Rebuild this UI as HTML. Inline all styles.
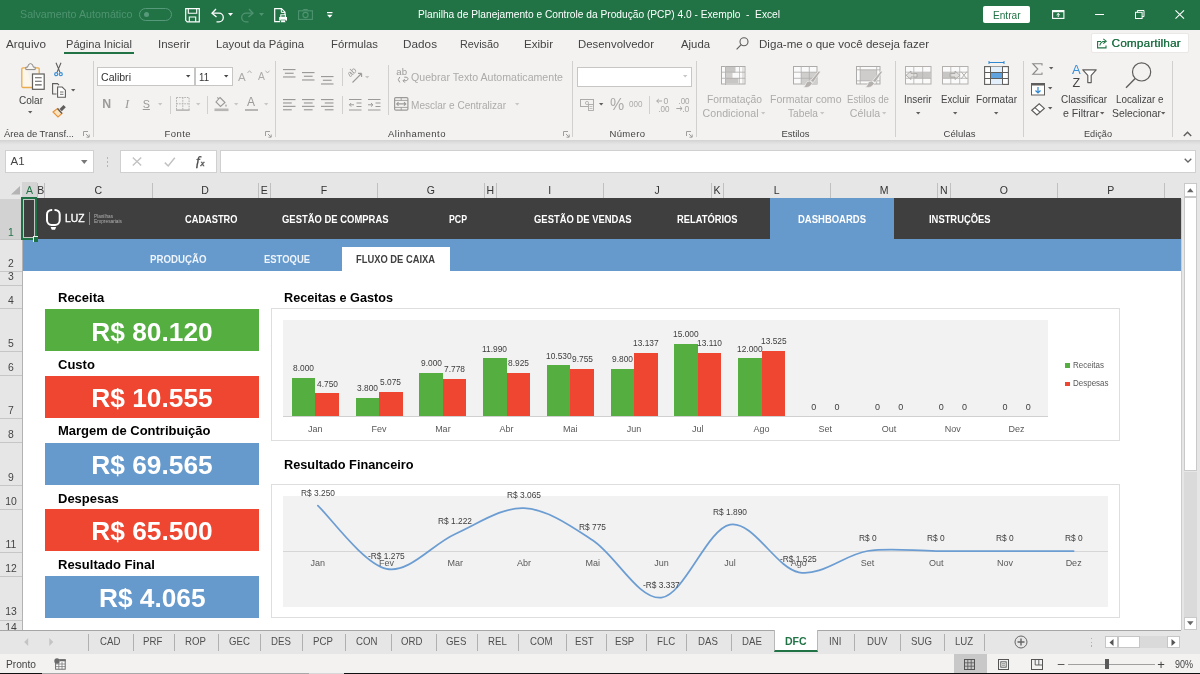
<!DOCTYPE html>
<html><head><meta charset="utf-8"><title>Excel</title>
<style>
html,body{margin:0;padding:0;}
body{width:1200px;height:674px;overflow:hidden;background:#e6e6e6;font-family:"Liberation Sans",sans-serif;}
#r{position:relative;width:1200px;height:674px;overflow:hidden;will-change:transform;}
#r div,#r svg{position:absolute;box-sizing:border-box;}
#r svg{overflow:visible;}
.t{white-space:nowrap;}
</style></head><body><div id="r">
<div style="left:0px;top:0px;width:1200px;height:30px;background:#217346;"></div>
<div class="t" style="left:20.00px;top:7.00px;font-size:11px;line-height:15px;color:#4f9370;transform:scaleX(0.9735);transform-origin:0 50%;">Salvamento Automático</div>
<div style="left:139px;top:7.5px;width:33px;height:13.5px;border:1px solid #57997b;border-radius:7px;"></div>
<div style="left:143.5px;top:11.5px;width:5.5px;height:5.5px;background:#57997b;border-radius:50%;"></div>
<div class="t" style="left:418.00px;top:7.00px;font-size:10.8px;line-height:15px;color:#fff;transform:scaleX(0.9440);transform-origin:0 50%;white-space:pre;">Planilha de Planejamento e Controle da Produção (PCP) 4.0 - Exemplo  -  Excel</div>
<div style="left:983px;top:6px;width:46.5px;height:16.5px;background:#fff;border-radius:2px;"></div>
<div class="t" style="left:992.75px;top:6.50px;font-size:11.5px;line-height:16px;color:#217346;transform:scaleX(0.8781);transform-origin:0 50%;">Entrar</div>
<div style="left:0px;top:30px;width:1200px;height:110px;background:#f3f2f1;"></div>
<div style="left:0px;top:140px;width:1200px;height:4.5px;background:linear-gradient(#d2d2d2,#e0e0e0 60%,#e6e6e6);"></div>
<div class="t" style="left:6.00px;top:35.70px;font-size:11.7px;line-height:16px;color:#444;letter-spacing:0.062px;">Arquivo</div>
<div class="t" style="left:66.00px;top:35.70px;font-size:11.7px;line-height:16px;color:#444;transform:scaleX(0.9494);transform-origin:0 50%;">Página Inicial</div>
<div class="t" style="left:158.00px;top:35.70px;font-size:11.7px;line-height:16px;color:#444;transform:scaleX(0.9855);transform-origin:0 50%;">Inserir</div>
<div class="t" style="left:216.00px;top:35.70px;font-size:11.7px;line-height:16px;color:#444;transform:scaleX(0.9673);transform-origin:0 50%;">Layout da Página</div>
<div class="t" style="left:331.00px;top:35.70px;font-size:11.7px;line-height:16px;color:#444;transform:scaleX(0.9649);transform-origin:0 50%;">Fórmulas</div>
<div class="t" style="left:403.00px;top:35.70px;font-size:11.7px;line-height:16px;color:#444;letter-spacing:0.054px;">Dados</div>
<div class="t" style="left:460.00px;top:35.70px;font-size:11.7px;line-height:16px;color:#444;transform:scaleX(0.9236);transform-origin:0 50%;">Revisão</div>
<div class="t" style="left:524.00px;top:35.70px;font-size:11.7px;line-height:16px;color:#444;transform:scaleX(0.9923);transform-origin:0 50%;">Exibir</div>
<div class="t" style="left:578.00px;top:35.70px;font-size:11.7px;line-height:16px;color:#444;transform:scaleX(0.9749);transform-origin:0 50%;">Desenvolvedor</div>
<div class="t" style="left:681.00px;top:35.70px;font-size:11.7px;line-height:16px;color:#444;transform:scaleX(0.9702);transform-origin:0 50%;">Ajuda</div>
<div class="t" style="left:759.00px;top:35.70px;font-size:11.7px;line-height:16px;color:#444;transform:scaleX(0.9912);transform-origin:0 50%;">Diga-me o que você deseja fazer</div>
<div style="left:64px;top:51.7px;width:70px;height:2.5px;background:#217346;"></div>
<div style="left:1090.5px;top:32.7px;width:98.5px;height:20.3px;background:#fff;border:1px solid #eae8e6;border-radius:2px;"></div>
<div class="t" style="left:1111.50px;top:35.10px;font-size:11.7px;line-height:16px;color:#217346;letter-spacing:0.191px;text-shadow:0.3px 0 0 #217346;">Compartilhar</div>
<div class="t" style="left:3.50px;top:127.10px;font-size:9.5px;line-height:13px;color:#444;transform:scaleX(0.9967);transform-origin:0 50%;">Área de Transf...</div>
<div class="t" style="left:164.50px;top:127.10px;font-size:9.5px;line-height:13px;color:#444;letter-spacing:0.427px;">Fonte</div>
<div class="t" style="left:388.00px;top:127.10px;font-size:9.5px;line-height:13px;color:#444;letter-spacing:0.469px;">Alinhamento</div>
<div class="t" style="left:609.50px;top:127.10px;font-size:9.5px;line-height:13px;color:#444;letter-spacing:0.342px;">Número</div>
<div class="t" style="left:781.50px;top:127.10px;font-size:9.5px;line-height:13px;color:#444;">Estilos</div>
<div class="t" style="left:943.50px;top:127.10px;font-size:9.5px;line-height:13px;color:#444;letter-spacing:0.053px;">Células</div>
<div class="t" style="left:1084.00px;top:127.10px;font-size:9.5px;line-height:13px;color:#444;transform:scaleX(0.9639);transform-origin:0 50%;">Edição</div>
<div style="left:93.0px;top:61px;width:1px;height:76px;background:#d2d0ce;"></div>
<div style="left:275.0px;top:61px;width:1px;height:76px;background:#d2d0ce;"></div>
<div style="left:572.3px;top:61px;width:1px;height:76px;background:#d2d0ce;"></div>
<div style="left:696.3px;top:61px;width:1px;height:76px;background:#d2d0ce;"></div>
<div style="left:894.7px;top:61px;width:1px;height:76px;background:#d2d0ce;"></div>
<div style="left:1023.1px;top:61px;width:1px;height:76px;background:#d2d0ce;"></div>
<div style="left:1171.9px;top:61px;width:1px;height:76px;background:#d2d0ce;"></div>
<svg style="left:83px;top:131px;" width="7" height="7" viewBox="0 0 7 7"><path d="M0.5 5 V0.5 H5" fill="none" stroke="#a19f9d" stroke-width="1"/><path d="M3 3 L6 6 M6.2 3.5 V6.2 H3.5" fill="none" stroke="#a19f9d" stroke-width="1"/></svg>
<svg style="left:265px;top:131px;" width="7" height="7" viewBox="0 0 7 7"><path d="M0.5 5 V0.5 H5" fill="none" stroke="#a19f9d" stroke-width="1"/><path d="M3 3 L6 6 M6.2 3.5 V6.2 H3.5" fill="none" stroke="#a19f9d" stroke-width="1"/></svg>
<svg style="left:562.5px;top:131px;" width="7" height="7" viewBox="0 0 7 7"><path d="M0.5 5 V0.5 H5" fill="none" stroke="#a19f9d" stroke-width="1"/><path d="M3 3 L6 6 M6.2 3.5 V6.2 H3.5" fill="none" stroke="#a19f9d" stroke-width="1"/></svg>
<svg style="left:686px;top:131px;" width="7" height="7" viewBox="0 0 7 7"><path d="M0.5 5 V0.5 H5" fill="none" stroke="#a19f9d" stroke-width="1"/><path d="M3 3 L6 6 M6.2 3.5 V6.2 H3.5" fill="none" stroke="#a19f9d" stroke-width="1"/></svg>
<svg style="left:1183px;top:131px;" width="9" height="6" viewBox="0 0 9 6"><path d="M0.8 5 L4.5 1.2 L8.2 5" fill="none" stroke="#605e5c" stroke-width="1.4"/></svg>
<svg style="left:20px;top:62px;" width="26" height="29" viewBox="0 0 26 29"><path d="M6.5 5.8 H3 a1.2 1.2 0 0 0 -1.2 1.2 V24.3 a1.2 1.2 0 0 0 1.2 1.2 H12" fill="#fdf6ea" stroke="#e9ab4c" stroke-width="1.3"/>
<path d="M14.5 5.8 H18 a1.2 1.2 0 0 1 1.2 1.2 V11.5" fill="none" stroke="#e9ab4c" stroke-width="1.3"/>
<path d="M5.8 7.6 V5.2 H7.6 Q8 1.6 10.5 1.6 Q13 1.6 13.4 5.2 H15.2 V7.6 Z" fill="#f6f5f4" stroke="#8a8886" stroke-width="1"/>
<rect x="12.5" y="12" width="11.7" height="15.3" fill="#fff" stroke="#605e5c" stroke-width="1.2"/>
<path d="M15 15.7 H21.7 M15 19.3 H21.7 M15 22.9 H21.7" stroke="#605e5c" stroke-width="1.1"/></svg>
<div class="t" style="left:18.70px;top:92.50px;font-size:10.6px;line-height:15px;color:#444;transform:scaleX(0.9480);transform-origin:0 50%;">Colar</div>
<svg style="left:28.3px;top:111.1px;" width="4.4" height="2.6" viewBox="0 0 4.4 2.6"><path d="M0 0 H4.4 L2.2 2.6 Z" fill="#605e5c"/></svg>
<svg style="left:53px;top:62px;" width="11" height="15" viewBox="0 0 11 15"><path d="M3 0.8 L7 10.4 M8 0.8 L4 10.4" stroke="#605e5c" stroke-width="1.1" fill="none"/>
<circle cx="3.2" cy="12.2" r="1.5" fill="none" stroke="#3a8fd6" stroke-width="1.2"/><circle cx="7.8" cy="12.2" r="1.5" fill="none" stroke="#3a8fd6" stroke-width="1.2"/></svg>
<svg style="left:52px;top:83px;" width="15" height="15" viewBox="0 0 15 15"><path d="M4.5 11 H0.6 V0.6 H5.5 L7 2.2" fill="none" stroke="#605e5c" stroke-width="1.1"/>
<path d="M5.6 4 H10.2 L13.4 7.2 V14.2 H5.6 Z" fill="#fff" stroke="#605e5c" stroke-width="1.1"/><path d="M8 9 H11.5 M8 11.3 H11.5" stroke="#605e5c" stroke-width="0.9"/></svg>
<svg style="left:71.1px;top:88.8px;" width="4.4" height="2.6" viewBox="0 0 4.4 2.6"><path d="M0 0 H4.4 L2.2 2.6 Z" fill="#605e5c"/></svg>
<svg style="left:52px;top:104px;" width="15" height="14" viewBox="0 0 15 14"><path d="M1 8 L5.5 4.5 L10 9.5 L6 13 Z" fill="#fbe3c0" stroke="#e8923a" stroke-width="1.1"/>
<path d="M7.5 5 L11.5 1 L13.8 3.2 L9.8 7.3 Z" fill="#605e5c"/><path d="M5.5 4.5 L10 9.5" stroke="#605e5c" stroke-width="1.3"/></svg>
<div style="left:97px;top:66.8px;width:97.5px;height:19.7px;background:#fff;border:1px solid #c8c6c4;"></div>
<div style="left:195.3px;top:66.8px;width:37.4px;height:19.7px;background:#fff;border:1px solid #c8c6c4;"></div>
<div class="t" style="left:100.70px;top:69.50px;font-size:10.8px;line-height:15px;color:#333;transform:scaleX(0.9805);transform-origin:0 50%;">Calibri</div>
<div class="t" style="left:198.50px;top:69.50px;font-size:10.8px;line-height:15px;color:#333;transform:scaleX(0.8922);transform-origin:0 50%;">11</div>
<svg style="left:185.8px;top:75.39999999999999px;" width="4.4" height="2.6" viewBox="0 0 4.4 2.6"><path d="M0 0 H4.4 L2.2 2.6 Z" fill="#444"/></svg>
<svg style="left:224.3px;top:75.39999999999999px;" width="4.4" height="2.6" viewBox="0 0 4.4 2.6"><path d="M0 0 H4.4 L2.2 2.6 Z" fill="#444"/></svg>
<div class="t" style="left:238.00px;top:68.50px;font-size:11.5px;line-height:16px;color:#adaba9;">A</div>
<svg style="left:246.5px;top:70px;" width="5" height="3.5" viewBox="0 0 5 3.5"><path d="M0.5 3 L2.5 0.7 L4.5 3" fill="none" stroke="#adaba9" stroke-width="0.9"/></svg>
<div class="t" style="left:258.00px;top:70.00px;font-size:10.3px;line-height:14px;color:#adaba9;">A</div>
<svg style="left:265px;top:70px;" width="5" height="3.5" viewBox="0 0 5 3.5"><path d="M0.5 0.7 L2.5 3 L4.5 0.7" fill="none" stroke="#adaba9" stroke-width="0.9"/></svg>
<div class="t" style="left:102.30px;top:96.00px;font-size:12.3px;line-height:17px;color:#9c9a98;font-weight:bold;">N</div>
<div class="t" style="left:125.00px;top:96.00px;font-size:12.5px;line-height:17px;color:#9c9a98;font-style:italic;font-family:'Liberation Serif',serif;">I</div>
<div class="t" style="left:142.70px;top:96.80px;font-size:10.8px;line-height:15px;color:#9c9a98;text-decoration:underline;">S</div>
<svg style="left:157.8px;top:103.1px;" width="4.4" height="2.6" viewBox="0 0 4.4 2.6"><path d="M0 0 H4.4 L2.2 2.6 Z" fill="#c8c6c4"/></svg>
<div style="left:169.5px;top:96px;width:1px;height:18px;background:#d2d0ce;"></div>
<svg style="left:176.3px;top:97px;" width="13.6" height="13.6" viewBox="0 0 13.6 13.6"><path d="M0.5 0.5 H13.1 V13 M0.5 0.5 V13 M6.8 0.5 V13 M0.5 6.8 H13.1" fill="none" stroke="#b4b2b0" stroke-width="1" stroke-dasharray="1.6 1"/><path d="M0 13.1 H13.6" stroke="#9c9a98" stroke-width="1.1"/></svg>
<svg style="left:195.8px;top:103.1px;" width="4.4" height="2.6" viewBox="0 0 4.4 2.6"><path d="M0 0 H4.4 L2.2 2.6 Z" fill="#c8c6c4"/></svg>
<div style="left:207px;top:96px;width:1px;height:18px;background:#d2d0ce;"></div>
<svg style="left:214px;top:96px;" width="15" height="16" viewBox="0 0 15 16"><path d="M6 1.5 L11 6.5 L6.5 10.5 L2 6 Z M4.5 3 L3.5 1.2" fill="none" stroke="#9c9a98" stroke-width="1.1"/><path d="M12 8 q1.5 2 0 3 q-1.5 -1 0 -3" fill="#9c9a98"/><rect x="0.5" y="12.5" width="14" height="2.6" fill="#b8b6b4"/></svg>
<svg style="left:233.8px;top:103.1px;" width="4.4" height="2.6" viewBox="0 0 4.4 2.6"><path d="M0 0 H4.4 L2.2 2.6 Z" fill="#c8c6c4"/></svg>
<div class="t" style="left:247.00px;top:94.30px;font-size:12px;line-height:16px;color:#9c9a98;">A</div>
<div style="left:244.5px;top:108.6px;width:13.5px;height:2.6px;background:#b8b6b4;"></div>
<svg style="left:263.8px;top:103.1px;" width="4.4" height="2.6" viewBox="0 0 4.4 2.6"><path d="M0 0 H4.4 L2.2 2.6 Z" fill="#c8c6c4"/></svg>
<svg style="left:283px;top:69px;" width="12.5" height="11.100000000000001" viewBox="0 0 12.5 11.100000000000001"><rect x="0.00" y="0.00" width="12.50" height="1.15" fill="#9c9a98"/><rect x="1.88" y="3.70" width="8.75" height="1.15" fill="#9c9a98"/><rect x="0.00" y="7.40" width="12.50" height="1.15" fill="#9c9a98"/></svg>
<svg style="left:302px;top:72.3px;" width="12.5" height="11.100000000000001" viewBox="0 0 12.5 11.100000000000001"><rect x="0.00" y="0.00" width="12.50" height="1.15" fill="#9c9a98"/><rect x="1.88" y="3.70" width="8.75" height="1.15" fill="#9c9a98"/><rect x="0.00" y="7.40" width="12.50" height="1.15" fill="#9c9a98"/></svg>
<svg style="left:321px;top:75.7px;" width="12.5" height="11.100000000000001" viewBox="0 0 12.5 11.100000000000001"><rect x="0.00" y="0.00" width="12.50" height="1.15" fill="#9c9a98"/><rect x="1.88" y="3.70" width="8.75" height="1.15" fill="#9c9a98"/><rect x="0.00" y="7.40" width="12.50" height="1.15" fill="#9c9a98"/></svg>
<svg style="left:283px;top:99px;" width="12.5" height="13.6" viewBox="0 0 12.5 13.6"><rect x="0.00" y="0.00" width="12.50" height="1.15" fill="#9c9a98"/><rect x="0.00" y="3.40" width="8.75" height="1.15" fill="#9c9a98"/><rect x="0.00" y="6.80" width="12.50" height="1.15" fill="#9c9a98"/><rect x="0.00" y="10.20" width="8.75" height="1.15" fill="#9c9a98"/></svg>
<svg style="left:302px;top:99px;" width="12.5" height="13.6" viewBox="0 0 12.5 13.6"><rect x="0.00" y="0.00" width="12.50" height="1.15" fill="#9c9a98"/><rect x="1.88" y="3.40" width="8.75" height="1.15" fill="#9c9a98"/><rect x="0.00" y="6.80" width="12.50" height="1.15" fill="#9c9a98"/><rect x="1.88" y="10.20" width="8.75" height="1.15" fill="#9c9a98"/></svg>
<svg style="left:321px;top:99px;" width="12.5" height="13.6" viewBox="0 0 12.5 13.6"><rect x="0.00" y="0.00" width="12.50" height="1.15" fill="#9c9a98"/><rect x="3.75" y="3.40" width="8.75" height="1.15" fill="#9c9a98"/><rect x="0.00" y="6.80" width="12.50" height="1.15" fill="#9c9a98"/><rect x="3.75" y="10.20" width="8.75" height="1.15" fill="#9c9a98"/></svg>
<div style="left:341.5px;top:68px;width:1px;height:18px;background:#d2d0ce;"></div>
<div style="left:341.5px;top:96px;width:1px;height:18px;background:#d2d0ce;"></div>
<div style="left:387.5px;top:65px;width:1px;height:50px;background:#d2d0ce;"></div>
<svg style="left:347px;top:67px;" width="17" height="17" viewBox="0 0 17 17"><path d="M5.5 15.5 L14.5 6.5 M14.6 6.4 H11 M14.6 6.4 V10" fill="none" stroke="#9c9a98" stroke-width="1.1"/><text x="0" y="0" font-size="8.8" fill="#9c9a98" font-family="Liberation Sans" transform="translate(3.2 10.6) rotate(-45)">ab</text></svg>
<svg style="left:365.3px;top:75.6px;" width="4.4" height="2.6" viewBox="0 0 4.4 2.6"><path d="M0 0 H4.4 L2.2 2.6 Z" fill="#c8c6c4"/></svg>
<svg style="left:348.5px;top:99px;" width="12.5" height="12" viewBox="0 0 12.5 12"><path d="M0 0.5 H12.5 M7.5 4 H12.5 M7.5 7.5 H12.5 M0 11 H12.5" stroke="#9c9a98" stroke-width="1.1"/><path d="M5 5.8 H0.5 M2.2 4 L0.4 5.8 L2.2 7.6" fill="none" stroke="#9c9a98" stroke-width="1"/></svg>
<svg style="left:368px;top:99px;" width="12.5" height="12" viewBox="0 0 12.5 12"><path d="M0 0.5 H12.5 M7.5 4 H12.5 M7.5 7.5 H12.5 M0 11 H12.5" stroke="#9c9a98" stroke-width="1.1"/><path d="M0 5.8 H4.8 M3 4 L4.9 5.8 L3 7.6" fill="none" stroke="#9c9a98" stroke-width="1"/></svg>
<svg style="left:396px;top:68px;" width="14" height="16" viewBox="0 0 14 16"><text x="0.3" y="7" font-size="9.6" fill="#9c9a98" font-family="Liberation Sans">ab</text><path d="M3.8 9 q-3 2.6 0 5.4" fill="none" stroke="#9c9a98" stroke-width="1"/><path d="M8.2 9.2 q4.6 -0.4 3.6 2.4 q-0.8 1.6 -4.6 1.2 M8.8 11 L7 12.8 L8.8 14.6" fill="none" stroke="#9c9a98" stroke-width="1"/></svg>
<div class="t" style="left:411.00px;top:70.00px;font-size:10.6px;line-height:15px;color:#adaba9;letter-spacing:0.010px;">Quebrar Texto Automaticamente</div>
<svg style="left:394px;top:97.3px;" width="14.5" height="13.8" viewBox="0 0 14.5 13.8"><rect x="0.6" y="0.6" width="13.3" height="12.6" rx="1.2" fill="none" stroke="#9c9a98" stroke-width="1.2"/><path d="M0.6 3.4 H13.9 M0.6 10.4 H13.9 M7.2 0.6 V3.4 M7.2 10.4 V13.2" stroke="#9c9a98" stroke-width="0.9"/><path d="M2.8 6.9 H11.7 M4.5 5.2 L2.7 6.9 L4.5 8.6 M10 5.2 L11.8 6.9 L10 8.6" fill="none" stroke="#9c9a98" stroke-width="1.1"/></svg>
<div class="t" style="left:411.00px;top:97.50px;font-size:10.6px;line-height:15px;color:#adaba9;transform:scaleX(0.9492);transform-origin:0 50%;">Mesclar e Centralizar</div>
<svg style="left:515.3px;top:103.1px;" width="4.4" height="2.6" viewBox="0 0 4.4 2.6"><path d="M0 0 H4.4 L2.2 2.6 Z" fill="#c8c6c4"/></svg>
<div style="left:577px;top:67px;width:115px;height:19.5px;background:#fff;border:1px solid #c8c6c4;"></div>
<svg style="left:683.3px;top:75.1px;" width="4.4" height="2.6" viewBox="0 0 4.4 2.6"><path d="M0 0 H4.4 L2.2 2.6 Z" fill="#c8c6c4"/></svg>
<svg style="left:580px;top:99px;" width="14" height="12" viewBox="0 0 14 12"><rect x="0.5" y="0.5" width="13" height="7" fill="none" stroke="#adaba9" stroke-width="1"/><circle cx="7" cy="4" r="1.6" fill="none" stroke="#adaba9" stroke-width="0.8"/><rect x="8.5" y="5.5" width="5" height="6" fill="#f3f2f1" stroke="#adaba9" stroke-width="0.9"/><path d="M9.5 7.5 H12.5 M9.5 9.5 H12.5" stroke="#adaba9" stroke-width="0.7"/></svg>
<svg style="left:599.3px;top:103.1px;" width="4.4" height="2.6" viewBox="0 0 4.4 2.6"><path d="M0 0 H4.4 L2.2 2.6 Z" fill="#605e5c"/></svg>
<div class="t" style="left:610.00px;top:94.00px;font-size:16px;line-height:21px;color:#adaba9;">%</div>
<div class="t" style="left:629.30px;top:97.30px;font-size:9.5px;line-height:13px;color:#adaba9;transform:scaleX(0.8517);transform-origin:0 50%;">000</div>
<div style="left:648.5px;top:96px;width:1px;height:18px;background:#d2d0ce;"></div>
<svg style="left:656px;top:97px;" width="14" height="16" viewBox="0 0 14 16"><text x="7.6" y="7" font-size="8.6" fill="#a8a6a4" font-family="Liberation Sans">0</text><text x="2.2" y="14.6" font-size="8.6" fill="#a8a6a4" font-family="Liberation Sans" textLength="11.2" lengthAdjust="spacingAndGlyphs">.00</text><path d="M6 4 H0.8 M2.8 2 L0.7 4 L2.8 6" fill="none" stroke="#a8a6a4" stroke-width="1"/></svg>
<svg style="left:676px;top:97px;" width="14" height="16" viewBox="0 0 14 16"><text x="2.4" y="7" font-size="8.6" fill="#a8a6a4" font-family="Liberation Sans" textLength="11.2" lengthAdjust="spacingAndGlyphs">.00</text><text x="8.6" y="14.6" font-size="8.6" fill="#a8a6a4" font-family="Liberation Sans">0</text><text x="6.3" y="14.6" font-size="8.6" fill="#a8a6a4" font-family="Liberation Sans">.</text><path d="M0.3 11.5 H6 M4 9.5 L6.1 11.5 L4 13.5" fill="none" stroke="#a8a6a4" stroke-width="1"/></svg>
<svg style="left:721.3px;top:66.3px;" width="24.5" height="18.5" viewBox="0 0 24.5 18.5"><rect x="0.5" y="0.5" width="23.5" height="17.5" fill="#fafafa" stroke="#adaba9" stroke-width="1"/><rect x="4.5" y="1" width="10" height="5.5" fill="#c8c6c4"/><rect x="4.5" y="6.5" width="7" height="5.5" fill="#d0cecc"/><rect x="4.5" y="12" width="13" height="5.5" fill="#c8c6c4"/><path d="M18.5 0.5 V18 M22 0.5 V18" stroke="#bdbbb9" stroke-width="0.8"/><path d="M0.5 6.2 H24.0" stroke="#adaba9" stroke-width="0.8"/><path d="M0.5 12.3 H24.0" stroke="#adaba9" stroke-width="0.8"/></svg>
<div style="left:725.3px;top:66.3px;width:1px;height:18.5px;background:#b8b6b4;"></div>
<div class="t" style="left:706.50px;top:91.50px;font-size:10.6px;line-height:15px;color:#adaba9;transform:scaleX(0.9731);transform-origin:0 50%;">Formatação</div>
<div class="t" style="left:702.50px;top:105.50px;font-size:10.6px;line-height:15px;color:#adaba9;letter-spacing:0.064px;">Condicional</div>
<svg style="left:760.8px;top:111.6px;" width="4.4" height="2.6" viewBox="0 0 4.4 2.6"><path d="M0 0 H4.4 L2.2 2.6 Z" fill="#c8c6c4"/></svg>
<svg style="left:793.3px;top:66.3px;" width="24.5" height="18.5" viewBox="0 0 24.5 18.5"><rect x="0.5" y="0.5" width="23.5" height="17.5" fill="#fafafa" stroke="#adaba9" stroke-width="1"/><rect x="8.2" y="6.2" width="16" height="6.2" fill="#d0cecc"/><rect x="8.2" y="12.4" width="16" height="5.6" fill="#d0cecc"/><path d="M8.2 0.5 V18.0" stroke="#adaba9" stroke-width="0.8"/><path d="M16.3 0.5 V18.0" stroke="#adaba9" stroke-width="0.8"/><path d="M0.5 6.2 H24.0" stroke="#adaba9" stroke-width="0.8"/><path d="M0.5 12.3 H24.0" stroke="#adaba9" stroke-width="0.8"/></svg>
<svg style="left:802.5px;top:70px;" width="18" height="19" viewBox="0 0 18 19"><path d="M15.6 1.2 q1.4 -0.6 1.7 0.9 L10.2 12.6 L7.6 10.8 Z" fill="#b3b0ad" stroke="#f3f2f1" stroke-width="0.7"/><path d="M7 11 q-3.6 -0.3 -4.3 3 q-0.4 2 -2.2 3 q5.5 2 8.8 -3.6 Z" fill="#b3b0ad" stroke="#f3f2f1" stroke-width="0.7"/></svg>
<div class="t" style="left:769.75px;top:91.50px;font-size:10.6px;line-height:15px;color:#adaba9;transform:scaleX(0.9956);transform-origin:0 50%;">Formatar como</div>
<div class="t" style="left:788.00px;top:105.50px;font-size:10.6px;line-height:15px;color:#adaba9;transform:scaleX(0.9610);transform-origin:0 50%;">Tabela</div>
<svg style="left:820.3px;top:111.6px;" width="4.4" height="2.6" viewBox="0 0 4.4 2.6"><path d="M0 0 H4.4 L2.2 2.6 Z" fill="#c8c6c4"/></svg>
<svg style="left:855.8px;top:66.3px;" width="24.5" height="18.5" viewBox="0 0 24.5 18.5"><rect x="0.5" y="0.5" width="23.5" height="17.5" fill="#fafafa" stroke="#adaba9" stroke-width="1"/><rect x="4.2" y="3.8" width="16.5" height="11" fill="#cfcdcb"/></svg>
<svg style="left:855.8px;top:66.3px;" width="24.5" height="18.5" viewBox="0 0 24.5 18.5"><path d="M4.2 0.5 V18 M20.7 0.5 V18 M0.5 3.8 H24 M0.5 14.8 H24" stroke="#adaba9" stroke-width="0.8"/></svg>
<svg style="left:865px;top:70px;" width="18" height="19" viewBox="0 0 18 19"><path d="M15.6 1.2 q1.4 -0.6 1.7 0.9 L10.2 12.6 L7.6 10.8 Z" fill="#b3b0ad" stroke="#f3f2f1" stroke-width="0.7"/><path d="M7 11 q-3.6 -0.3 -4.3 3 q-0.4 2 -2.2 3 q5.5 2 8.8 -3.6 Z" fill="#b3b0ad" stroke="#f3f2f1" stroke-width="0.7"/></svg>
<div class="t" style="left:846.50px;top:91.50px;font-size:10.6px;line-height:15px;color:#adaba9;transform:scaleX(0.9145);transform-origin:0 50%;">Estilos de</div>
<div class="t" style="left:849.75px;top:105.50px;font-size:10.6px;line-height:15px;color:#adaba9;letter-spacing:0.093px;">Célula</div>
<svg style="left:882.3px;top:111.6px;" width="4.4" height="2.6" viewBox="0 0 4.4 2.6"><path d="M0 0 H4.4 L2.2 2.6 Z" fill="#c8c6c4"/></svg>
<svg style="left:904.5px;top:66px;" width="26.5" height="18.5" viewBox="0 0 26.5 18.5"><rect x="0.5" y="0.5" width="25.5" height="17.5" fill="#fafafa" stroke="#b3b0ad" stroke-width="1"/><rect x="9" y="6.5" width="17" height="6" fill="#c8c6c4"/><path d="M1 9.3 L6 5 V7.5 H12 V11 H6 V13.5 Z" fill="#e1dfdd" stroke="#a19f9d" stroke-width="0.8"/><path d="M8.8 0.5 V18.0" stroke="#b3b0ad" stroke-width="0.8"/><path d="M17.7 0.5 V18.0" stroke="#b3b0ad" stroke-width="0.8"/><path d="M0.5 6.2 H26.0" stroke="#b3b0ad" stroke-width="0.8"/><path d="M0.5 12.3 H26.0" stroke="#b3b0ad" stroke-width="0.8"/></svg>
<div class="t" style="left:904.25px;top:92.00px;font-size:10.6px;line-height:15px;color:#444;transform:scaleX(0.9343);transform-origin:0 50%;">Inserir</div>
<svg style="left:915.8px;top:111.6px;" width="4.4" height="2.6" viewBox="0 0 4.4 2.6"><path d="M0 0 H4.4 L2.2 2.6 Z" fill="#605e5c"/></svg>
<svg style="left:941.5px;top:66px;" width="26.5" height="18.5" viewBox="0 0 26.5 18.5"><rect x="0.5" y="0.5" width="25.5" height="17.5" fill="#fafafa" stroke="#b3b0ad" stroke-width="1"/><rect x="1" y="6.5" width="14" height="6" fill="#c8c6c4"/><path d="M8 7.5 H13 V5 L18 9.3 L13 13.5 V11 H8 Z" fill="#e1dfdd" stroke="#a19f9d" stroke-width="0.8"/><path d="M19 5.5 L25 13 M25 5.5 L19 13" stroke="#b3b0ad" stroke-width="1"/><path d="M8.8 0.5 V18.0" stroke="#b3b0ad" stroke-width="0.8"/><path d="M17.7 0.5 V18.0" stroke="#b3b0ad" stroke-width="0.8"/><path d="M0.5 6.2 H26.0" stroke="#b3b0ad" stroke-width="0.8"/><path d="M0.5 12.3 H26.0" stroke="#b3b0ad" stroke-width="0.8"/></svg>
<div class="t" style="left:940.50px;top:92.00px;font-size:10.6px;line-height:15px;color:#444;transform:scaleX(0.9123);transform-origin:0 50%;">Excluir</div>
<svg style="left:952.8px;top:111.6px;" width="4.4" height="2.6" viewBox="0 0 4.4 2.6"><path d="M0 0 H4.4 L2.2 2.6 Z" fill="#605e5c"/></svg>
<svg style="left:984px;top:61px;" width="25" height="24" viewBox="0 0 25 24"><path d="M5 1.5 H20 M5 0 V3 M20 0 V3" stroke="#2f86d1" stroke-width="1"/>
<rect x="0.6" y="5.6" width="23.8" height="17.8" fill="#fff" stroke="#605e5c" stroke-width="1.1"/>
<rect x="6.5" y="5.6" width="12" height="17.8" fill="#e3f0fb"/><rect x="6.5" y="11.5" width="12" height="6" fill="#5ea3e0"/>
<path d="M6.5 5.6 V23.4 M18.5 5.6 V23.4 M0.6 11.5 H24.4 M0.6 17.5 H24.4" stroke="#605e5c" stroke-width="1"/></svg>
<div class="t" style="left:976.00px;top:92.00px;font-size:10.6px;line-height:15px;color:#444;transform:scaleX(0.9541);transform-origin:0 50%;">Formatar</div>
<svg style="left:994.3px;top:111.6px;" width="4.4" height="2.6" viewBox="0 0 4.4 2.6"><path d="M0 0 H4.4 L2.2 2.6 Z" fill="#605e5c"/></svg>
<svg style="left:1031.5px;top:62.5px;" width="11" height="12" viewBox="0 0 11 12"><path d="M10 2.5 V0.7 H0.8 L5.8 6 L0.8 11.3 H10 V9.5" fill="none" stroke="#8a8886" stroke-width="1.1"/></svg>
<svg style="left:1049.3px;top:67.1px;" width="4.4" height="2.6" viewBox="0 0 4.4 2.6"><path d="M0 0 H4.4 L2.2 2.6 Z" fill="#605e5c"/></svg>
<svg style="left:1030.5px;top:82.5px;" width="14" height="12.5" viewBox="0 0 14 12.5"><rect x="0.5" y="0.5" width="13" height="11.5" fill="#fff" stroke="#605e5c" stroke-width="1"/><rect x="0.5" y="0.5" width="13" height="2" fill="#605e5c"/><path d="M7 4 V10 M4.5 7.5 L7 10 L9.5 7.5" fill="none" stroke="#2f86d1" stroke-width="1.2"/></svg>
<svg style="left:1048.3px;top:87.3px;" width="4.4" height="2.6" viewBox="0 0 4.4 2.6"><path d="M0 0 H4.4 L2.2 2.6 Z" fill="#605e5c"/></svg>
<svg style="left:1030.5px;top:102.5px;" width="14" height="12.5" viewBox="0 0 14 12.5"><path d="M0.8 7.3 L8.2 0.8 L13.3 5.4 L5.9 12 Z" fill="#fff" stroke="#605e5c" stroke-width="1.2"/><path d="M3.9 4.6 L9 9.2" stroke="#605e5c" stroke-width="1.1"/></svg>
<svg style="left:1048.3px;top:107.39999999999999px;" width="4.4" height="2.6" viewBox="0 0 4.4 2.6"><path d="M0 0 H4.4 L2.2 2.6 Z" fill="#605e5c"/></svg>
<svg style="left:1071.5px;top:63px;" width="26" height="26" viewBox="0 0 26 26"><text x="0" y="11.3" font-size="13" fill="#3a8fd6" font-family="Liberation Sans">A</text><text x="0.6" y="23.8" font-size="12.5" fill="#444" font-family="Liberation Sans">Z</text>
<path d="M10.8 6.8 H24.2 L19.2 12.4 V19.6 L15.8 19.6 V12.4 Z" fill="#fff" stroke="#605e5c" stroke-width="1.2" stroke-linejoin="round"/></svg>
<div class="t" style="left:1060.50px;top:92.00px;font-size:10.6px;line-height:15px;color:#444;transform:scaleX(0.9415);transform-origin:0 50%;">Classificar</div>
<div class="t" style="left:1063.00px;top:105.50px;font-size:10.6px;line-height:15px;color:#444;letter-spacing:0.012px;">e Filtrar</div>
<svg style="left:1099.8px;top:111.6px;" width="4.4" height="2.6" viewBox="0 0 4.4 2.6"><path d="M0 0 H4.4 L2.2 2.6 Z" fill="#605e5c"/></svg>
<svg style="left:1125px;top:62.3px;" width="27" height="27" viewBox="0 0 27 27"><circle cx="16.6" cy="9.9" r="9.1" fill="none" stroke="#605e5c" stroke-width="1.2"/><path d="M10.2 16.6 L1 25.8" stroke="#605e5c" stroke-width="1.4"/></svg>
<div class="t" style="left:1115.75px;top:92.00px;font-size:10.6px;line-height:15px;color:#444;transform:scaleX(0.9272);transform-origin:0 50%;">Localizar e</div>
<div class="t" style="left:1111.50px;top:105.50px;font-size:10.6px;line-height:15px;color:#444;transform:scaleX(0.9789);transform-origin:0 50%;">Selecionar</div>
<svg style="left:1161.3px;top:111.6px;" width="4.4" height="2.6" viewBox="0 0 4.4 2.6"><path d="M0 0 H4.4 L2.2 2.6 Z" fill="#605e5c"/></svg>
<div style="left:4.5px;top:149.8px;width:89px;height:23px;background:#fff;border:1px solid #d0d0d0;"></div>
<div class="t" style="left:10.50px;top:153.30px;font-size:11.5px;line-height:16px;color:#444;">A1</div>
<div style="left:119.8px;top:149.8px;width:97.3px;height:23px;background:#fff;border:1px solid #d0d0d0;"></div>
<div style="left:220px;top:149.8px;width:975.5px;height:23px;background:#fff;border:1px solid #d0d0d0;"></div>
<div style="left:22px;top:182px;width:14.5px;height:16px;background:#d4d4d4;"></div>
<div class="t" style="left:26.00px;top:183.30px;font-size:10.5px;line-height:15px;color:#217346;">A</div>
<div style="left:36.5px;top:183px;width:1px;height:15px;background:#c0c0c0;"></div>
<div class="t" style="left:37.25px;top:183.30px;font-size:10.5px;line-height:15px;color:#333;">B</div>
<div style="left:44.0px;top:183px;width:1px;height:15px;background:#c0c0c0;"></div>
<div class="t" style="left:94.46px;top:183.30px;font-size:10.5px;line-height:15px;color:#333;">C</div>
<div style="left:151.5px;top:183px;width:1px;height:15px;background:#c0c0c0;"></div>
<div class="t" style="left:201.21px;top:183.30px;font-size:10.5px;line-height:15px;color:#333;">D</div>
<div style="left:257.5px;top:183px;width:1px;height:15px;background:#c0c0c0;"></div>
<div class="t" style="left:260.75px;top:183.30px;font-size:10.5px;line-height:15px;color:#333;">E</div>
<div style="left:270.0px;top:183px;width:1px;height:15px;background:#c0c0c0;"></div>
<div class="t" style="left:320.79px;top:183.30px;font-size:10.5px;line-height:15px;color:#333;">F</div>
<div style="left:377.0px;top:183px;width:1px;height:15px;background:#c0c0c0;"></div>
<div class="t" style="left:426.67px;top:183.30px;font-size:10.5px;line-height:15px;color:#333;">G</div>
<div style="left:483.5px;top:183px;width:1px;height:15px;background:#c0c0c0;"></div>
<div class="t" style="left:486.46px;top:183.30px;font-size:10.5px;line-height:15px;color:#333;">H</div>
<div style="left:496.0px;top:183px;width:1px;height:15px;background:#c0c0c0;"></div>
<div class="t" style="left:548.29px;top:183.30px;font-size:10.5px;line-height:15px;color:#333;">I</div>
<div style="left:602.5px;top:183px;width:1px;height:15px;background:#c0c0c0;"></div>
<div class="t" style="left:654.38px;top:183.30px;font-size:10.5px;line-height:15px;color:#333;">J</div>
<div style="left:710.5px;top:183px;width:1px;height:15px;background:#c0c0c0;"></div>
<div class="t" style="left:713.50px;top:183.30px;font-size:10.5px;line-height:15px;color:#333;">K</div>
<div style="left:722.5px;top:183px;width:1px;height:15px;background:#c0c0c0;"></div>
<div class="t" style="left:773.83px;top:183.30px;font-size:10.5px;line-height:15px;color:#333;">L</div>
<div style="left:830.0px;top:183px;width:1px;height:15px;background:#c0c0c0;"></div>
<div class="t" style="left:879.63px;top:183.30px;font-size:10.5px;line-height:15px;color:#333;">M</div>
<div style="left:937.0px;top:183px;width:1px;height:15px;background:#c0c0c0;"></div>
<div class="t" style="left:939.96px;top:183.30px;font-size:10.5px;line-height:15px;color:#333;">N</div>
<div style="left:949.5px;top:183px;width:1px;height:15px;background:#c0c0c0;"></div>
<div class="t" style="left:999.67px;top:183.30px;font-size:10.5px;line-height:15px;color:#333;">O</div>
<div style="left:1057.0px;top:183px;width:1px;height:15px;background:#c0c0c0;"></div>
<div class="t" style="left:1107.25px;top:183.30px;font-size:10.5px;line-height:15px;color:#333;">P</div>
<div style="left:1163.5px;top:183px;width:1px;height:15px;background:#c0c0c0;"></div>
<div style="left:22px;top:197.6px;width:1159px;height:0.7px;background:#cfcfcf;"></div>
<svg style="left:10.5px;top:186.3px;" width="9" height="8.5" viewBox="0 0 9 8.5"><path d="M9 0 L9 8.5 L0 8.5 Z" fill="#b4b4b4"/></svg>
<div style="left:22px;top:198.2px;width:1159px;height:432.3px;background:#fff;"></div>
<div style="left:22px;top:198.2px;width:1159px;height:40.5px;background:#3f3f3f;"></div>
<div style="left:22px;top:238.6px;width:1159px;height:32.4px;background:#6699cc;"></div>
<div style="left:769.7px;top:198.2px;width:124.5px;height:41px;background:#6699cc;"></div>
<div style="left:341.5px;top:246.5px;width:108.5px;height:24.5px;background:#fff;"></div>
<div class="t" style="left:184.50px;top:212.50px;font-size:10.2px;line-height:14px;color:#fff;font-weight:bold;transform:scaleX(0.9094);transform-origin:0 50%;">CADASTRO</div>
<div class="t" style="left:281.50px;top:212.50px;font-size:10.2px;line-height:14px;color:#fff;font-weight:bold;transform:scaleX(0.9269);transform-origin:0 50%;">GESTÃO DE COMPRAS</div>
<div class="t" style="left:449.00px;top:212.50px;font-size:10.2px;line-height:14px;color:#fff;font-weight:bold;transform:scaleX(0.8593);transform-origin:0 50%;">PCP</div>
<div class="t" style="left:534.00px;top:212.50px;font-size:10.2px;line-height:14px;color:#fff;font-weight:bold;transform:scaleX(0.9260);transform-origin:0 50%;">GESTÃO DE VENDAS</div>
<div class="t" style="left:677.00px;top:212.50px;font-size:10.2px;line-height:14px;color:#fff;font-weight:bold;transform:scaleX(0.9163);transform-origin:0 50%;">RELATÓRIOS</div>
<div class="t" style="left:797.50px;top:212.50px;font-size:10.2px;line-height:14px;color:#fff;font-weight:bold;transform:scaleX(0.9313);transform-origin:0 50%;">DASHBOARDS</div>
<div class="t" style="left:929.00px;top:212.50px;font-size:10.2px;line-height:14px;color:#fff;font-weight:bold;transform:scaleX(0.9208);transform-origin:0 50%;">INSTRUÇÕES</div>
<div class="t" style="left:149.50px;top:253.00px;font-size:10.2px;line-height:14px;color:#eef4fb;font-weight:bold;transform:scaleX(0.9507);transform-origin:0 50%;">PRODUÇÃO</div>
<div class="t" style="left:264.00px;top:253.00px;font-size:10.2px;line-height:14px;color:#eef4fb;font-weight:bold;transform:scaleX(0.9269);transform-origin:0 50%;">ESTOQUE</div>
<div class="t" style="left:356.00px;top:252.50px;font-size:10.2px;line-height:14px;color:#404040;font-weight:bold;transform:scaleX(0.9183);transform-origin:0 50%;">FLUXO DE CAIXA</div>
<svg style="left:45px;top:208px;" width="17" height="23" viewBox="0 0 17 23"><rect x="2" y="1.9" width="12.7" height="15" rx="4.6" fill="none" stroke="#fff" stroke-width="2"/><rect x="7.2" y="0" width="2.3" height="3.5" fill="#3f3f3f"/><path d="M5.6 18.9 h5.6 l-1.2 2.9 h-3.2 z" fill="#fff"/></svg>
<div class="t" style="left:65.00px;top:211.30px;font-size:10.8px;line-height:15px;color:#fff;transform:scaleX(0.9560);transform-origin:0 50%;-webkit-text-stroke:0.35px #fff;">LUZ</div>
<div style="left:89.3px;top:212px;width:0.9px;height:12.5px;background:#8a8a8a;"></div>
<div class="t" style="left:93.70px;top:212.00px;font-size:5px;line-height:8px;color:#b0b0b0;transform:scaleX(0.9364);transform-origin:0 50%;">Planilhas</div>
<div class="t" style="left:93.70px;top:217.30px;font-size:5px;line-height:8px;color:#b0b0b0;transform:scaleX(0.9597);transform-origin:0 50%;">Empresariais</div>
<div style="left:0px;top:198.5px;width:22px;height:432px;background:#e6e6e6;"></div>
<div style="left:0px;top:198.5px;width:22px;height:40.5px;background:#d2d2d2;"></div>
<div class="t" style="left:8.11px;top:225.80px;font-size:10.4px;line-height:14px;color:#217346;">1</div>
<div class="t" style="left:8.11px;top:257.30px;font-size:10.4px;line-height:14px;color:#444444;">2</div>
<div class="t" style="left:8.11px;top:269.80px;font-size:10.4px;line-height:14px;color:#444444;">3</div>
<div class="t" style="left:8.11px;top:294.30px;font-size:10.4px;line-height:14px;color:#444444;">4</div>
<div class="t" style="left:8.11px;top:337.30px;font-size:10.4px;line-height:14px;color:#444444;">5</div>
<div class="t" style="left:8.11px;top:361.30px;font-size:10.4px;line-height:14px;color:#444444;">6</div>
<div class="t" style="left:8.11px;top:404.30px;font-size:10.4px;line-height:14px;color:#444444;">7</div>
<div class="t" style="left:8.11px;top:427.80px;font-size:10.4px;line-height:14px;color:#444444;">8</div>
<div class="t" style="left:8.11px;top:471.30px;font-size:10.4px;line-height:14px;color:#444444;">9</div>
<div class="t" style="left:5.22px;top:495.30px;font-size:10.4px;line-height:14px;color:#444444;">10</div>
<div class="t" style="left:5.61px;top:538.30px;font-size:10.4px;line-height:14px;color:#444444;">11</div>
<div class="t" style="left:5.22px;top:562.30px;font-size:10.4px;line-height:14px;color:#444444;">12</div>
<div class="t" style="left:5.22px;top:604.80px;font-size:10.4px;line-height:14px;color:#444444;">13</div>
<div class="t" style="left:5.22px;top:621.00px;font-size:10.4px;line-height:14px;color:#444444;">14</div>
<div style="left:0px;top:238.5px;width:22px;height:1px;background:#c6c6c6;"></div>
<div style="left:0px;top:270.5px;width:22px;height:1px;background:#c6c6c6;"></div>
<div style="left:0px;top:284.7px;width:22px;height:1px;background:#c6c6c6;"></div>
<div style="left:0px;top:308.0px;width:22px;height:1px;background:#c6c6c6;"></div>
<div style="left:0px;top:351.0px;width:22px;height:1px;background:#c6c6c6;"></div>
<div style="left:0px;top:374.5px;width:22px;height:1px;background:#c6c6c6;"></div>
<div style="left:0px;top:418.0px;width:22px;height:1px;background:#c6c6c6;"></div>
<div style="left:0px;top:441.5px;width:22px;height:1px;background:#c6c6c6;"></div>
<div style="left:0px;top:485.0px;width:22px;height:1px;background:#c6c6c6;"></div>
<div style="left:0px;top:509.0px;width:22px;height:1px;background:#c6c6c6;"></div>
<div style="left:0px;top:552.0px;width:22px;height:1px;background:#c6c6c6;"></div>
<div style="left:0px;top:575.5px;width:22px;height:1px;background:#c6c6c6;"></div>
<div style="left:0px;top:619.5px;width:22px;height:1px;background:#c6c6c6;"></div>
<div style="left:21.6px;top:198.5px;width:0.8px;height:432px;background:#b2b2b2;"></div>
<div style="left:20.8px;top:197.2px;width:16.4px;height:42.8px;border:2px solid #1e7145;box-shadow:inset 0 0 0 1px rgba(255,255,255,0.7);"></div>
<div style="left:32.5px;top:236px;width:5.7px;height:5.7px;background:#1e7145;border-left:1px solid #e8f2ec;border-top:1px solid #e8f2ec;"></div>
<div class="t" style="left:58.00px;top:288.50px;font-size:13px;line-height:18px;color:#000;font-weight:bold;">Receita</div>
<div style="left:44.5px;top:309.4px;width:214px;height:41.80000000000001px;background:#54ae40;"></div>
<div class="t" style="left:91.25px;top:314.50px;font-size:26.3px;line-height:34px;color:#fff;font-weight:bold;letter-spacing:0.018px;">R$ 80.120</div>
<div class="t" style="left:58.00px;top:355.50px;font-size:13px;line-height:18px;color:#000;font-weight:bold;">Custo</div>
<div style="left:44.5px;top:376px;width:214px;height:42px;background:#ee4630;"></div>
<div class="t" style="left:91.25px;top:381.20px;font-size:26.3px;line-height:34px;color:#fff;font-weight:bold;letter-spacing:0.018px;">R$ 10.555</div>
<div class="t" style="left:58.00px;top:422.00px;font-size:13px;line-height:18px;color:#000;font-weight:bold;">Margem de Contribuição</div>
<div style="left:44.5px;top:442.6px;width:214px;height:42.299999999999955px;background:#6699cc;"></div>
<div class="t" style="left:91.25px;top:447.95px;font-size:26.3px;line-height:34px;color:#fff;font-weight:bold;letter-spacing:0.018px;">R$ 69.565</div>
<div class="t" style="left:58.00px;top:489.50px;font-size:13px;line-height:18px;color:#000;font-weight:bold;">Despesas</div>
<div style="left:44.5px;top:509.4px;width:214px;height:41.700000000000045px;background:#ee4630;"></div>
<div class="t" style="left:91.25px;top:514.45px;font-size:26.3px;line-height:34px;color:#fff;font-weight:bold;letter-spacing:0.018px;">R$ 65.500</div>
<div class="t" style="left:58.00px;top:556.00px;font-size:13px;line-height:18px;color:#000;font-weight:bold;">Resultado Final</div>
<div style="left:44.5px;top:576px;width:214px;height:41.799999999999955px;background:#6699cc;"></div>
<div class="t" style="left:98.75px;top:581.10px;font-size:26.3px;line-height:34px;color:#fff;font-weight:bold;transform:scaleX(0.9979);transform-origin:0 50%;">R$ 4.065</div>
<div class="t" style="left:283.50px;top:288.50px;font-size:13px;line-height:18px;color:#000;font-weight:bold;transform:scaleX(0.9732);transform-origin:0 50%;">Receitas e Gastos</div>
<div class="t" style="left:283.50px;top:456.00px;font-size:13px;line-height:18px;color:#000;font-weight:bold;transform:scaleX(0.9797);transform-origin:0 50%;">Resultado Financeiro</div>
<div style="left:271px;top:308px;width:849px;height:133px;background:#fff;border:1px solid #dedede;"></div>
<div style="left:283.2px;top:320.3px;width:765.3px;height:96px;background:#f2f2f2;"></div>
<div style="left:283.2px;top:416px;width:765.3px;height:0.8px;background:#d0d0d0;"></div>
<div style="left:291.93px;top:377.63px;width:23.45px;height:38.67px;background:#54ae40;"></div>
<div class="t" style="left:293.18px;top:361.83px;font-size:9px;line-height:13px;color:#404040;transform:scaleX(0.9300);transform-origin:0 50%;">8.000</div>
<div style="left:315.38px;top:393.34px;width:23.45px;height:22.96px;background:#ee4630;"></div>
<div class="t" style="left:316.63px;top:377.54px;font-size:9px;line-height:13px;color:#404040;transform:scaleX(0.9300);transform-origin:0 50%;">4.750</div>
<div class="t" style="left:308.12px;top:422.50px;font-size:9px;line-height:13px;color:#595959;">Jan</div>
<div style="left:355.68px;top:397.93px;width:23.45px;height:18.37px;background:#54ae40;"></div>
<div class="t" style="left:356.93px;top:382.13px;font-size:9px;line-height:13px;color:#404040;transform:scaleX(0.9300);transform-origin:0 50%;">3.800</div>
<div style="left:379.12px;top:391.77px;width:23.45px;height:24.53px;background:#ee4630;"></div>
<div class="t" style="left:380.38px;top:375.97px;font-size:9px;line-height:13px;color:#404040;transform:scaleX(0.9300);transform-origin:0 50%;">5.075</div>
<div class="t" style="left:371.62px;top:422.50px;font-size:9px;line-height:13px;color:#595959;">Fev</div>
<div style="left:419.43px;top:372.8px;width:23.45px;height:43.5px;background:#54ae40;"></div>
<div class="t" style="left:420.68px;top:357.00px;font-size:9px;line-height:13px;color:#404040;transform:scaleX(0.9300);transform-origin:0 50%;">9.000</div>
<div style="left:442.88px;top:378.71px;width:23.45px;height:37.59px;background:#ee4630;"></div>
<div class="t" style="left:444.13px;top:362.91px;font-size:9px;line-height:13px;color:#404040;transform:scaleX(0.9300);transform-origin:0 50%;">7.778</div>
<div class="t" style="left:435.13px;top:422.50px;font-size:9px;line-height:13px;color:#595959;">Mar</div>
<div style="left:483.18px;top:358.35px;width:23.45px;height:57.95px;background:#54ae40;"></div>
<div class="t" style="left:482.41px;top:342.55px;font-size:9px;line-height:13px;color:#404040;transform:scaleX(0.9300);transform-origin:0 50%;">11.990</div>
<div style="left:506.62px;top:373.16px;width:23.45px;height:43.14px;background:#ee4630;"></div>
<div class="t" style="left:507.88px;top:357.36px;font-size:9px;line-height:13px;color:#404040;transform:scaleX(0.9300);transform-origin:0 50%;">8.925</div>
<div class="t" style="left:499.62px;top:422.50px;font-size:9px;line-height:13px;color:#595959;">Abr</div>
<div style="left:546.92px;top:365.41px;width:23.45px;height:50.9px;background:#54ae40;"></div>
<div class="t" style="left:545.85px;top:349.61px;font-size:9px;line-height:13px;color:#404040;transform:scaleX(0.9300);transform-origin:0 50%;">10.530</div>
<div style="left:570.38px;top:369.15px;width:23.45px;height:47.15px;background:#ee4630;"></div>
<div class="t" style="left:571.63px;top:353.35px;font-size:9px;line-height:13px;color:#404040;transform:scaleX(0.9300);transform-origin:0 50%;">9.755</div>
<div class="t" style="left:563.12px;top:422.50px;font-size:9px;line-height:13px;color:#595959;">Mai</div>
<div style="left:610.67px;top:368.93px;width:23.45px;height:47.37px;background:#54ae40;"></div>
<div class="t" style="left:611.93px;top:353.13px;font-size:9px;line-height:13px;color:#404040;transform:scaleX(0.9300);transform-origin:0 50%;">9.800</div>
<div style="left:634.12px;top:352.8px;width:23.45px;height:63.5px;background:#ee4630;"></div>
<div class="t" style="left:633.05px;top:337.00px;font-size:9px;line-height:13px;color:#404040;transform:scaleX(0.9300);transform-origin:0 50%;">13.137</div>
<div class="t" style="left:626.87px;top:422.50px;font-size:9px;line-height:13px;color:#595959;">Jun</div>
<div style="left:674.42px;top:343.8px;width:23.45px;height:72.5px;background:#54ae40;"></div>
<div class="t" style="left:673.35px;top:328.00px;font-size:9px;line-height:13px;color:#404040;transform:scaleX(0.9300);transform-origin:0 50%;">15.000</div>
<div style="left:697.88px;top:352.94px;width:23.45px;height:63.37px;background:#ee4630;"></div>
<div class="t" style="left:697.11px;top:337.13px;font-size:9px;line-height:13px;color:#404040;transform:scaleX(0.9300);transform-origin:0 50%;">13.110</div>
<div class="t" style="left:692.12px;top:422.50px;font-size:9px;line-height:13px;color:#595959;">Jul</div>
<div style="left:738.17px;top:358.3px;width:23.45px;height:58.0px;background:#54ae40;"></div>
<div class="t" style="left:737.10px;top:342.50px;font-size:9px;line-height:13px;color:#404040;transform:scaleX(0.9300);transform-origin:0 50%;">12.000</div>
<div style="left:761.62px;top:350.93px;width:23.45px;height:65.37px;background:#ee4630;"></div>
<div class="t" style="left:760.55px;top:335.13px;font-size:9px;line-height:13px;color:#404040;transform:scaleX(0.9300);transform-origin:0 50%;">13.525</div>
<div class="t" style="left:753.62px;top:422.50px;font-size:9px;line-height:13px;color:#595959;">Ago</div>
<div class="t" style="left:811.15px;top:400.50px;font-size:9px;line-height:13px;color:#404040;">0</div>
<div class="t" style="left:834.60px;top:400.50px;font-size:9px;line-height:13px;color:#404040;">0</div>
<div class="t" style="left:818.62px;top:422.50px;font-size:9px;line-height:13px;color:#595959;">Set</div>
<div class="t" style="left:874.90px;top:400.50px;font-size:9px;line-height:13px;color:#404040;">0</div>
<div class="t" style="left:898.35px;top:400.50px;font-size:9px;line-height:13px;color:#404040;">0</div>
<div class="t" style="left:881.87px;top:422.50px;font-size:9px;line-height:13px;color:#595959;">Out</div>
<div class="t" style="left:938.65px;top:400.50px;font-size:9px;line-height:13px;color:#404040;">0</div>
<div class="t" style="left:962.10px;top:400.50px;font-size:9px;line-height:13px;color:#404040;">0</div>
<div class="t" style="left:944.87px;top:422.50px;font-size:9px;line-height:13px;color:#595959;">Nov</div>
<div class="t" style="left:1002.40px;top:400.50px;font-size:9px;line-height:13px;color:#404040;">0</div>
<div class="t" style="left:1025.85px;top:400.50px;font-size:9px;line-height:13px;color:#404040;">0</div>
<div class="t" style="left:1008.62px;top:422.50px;font-size:9px;line-height:13px;color:#595959;">Dez</div>
<div style="left:1065px;top:363px;width:4.5px;height:4.5px;background:#54ae40;"></div>
<div class="t" style="left:1073.00px;top:358.80px;font-size:9px;line-height:13px;color:#595959;transform:scaleX(0.8853);transform-origin:0 50%;">Receitas</div>
<div style="left:1065px;top:381.5px;width:4.5px;height:4.5px;background:#ee4630;"></div>
<div class="t" style="left:1073.00px;top:377.30px;font-size:9px;line-height:13px;color:#595959;transform:scaleX(0.8870);transform-origin:0 50%;">Despesas</div>
<div style="left:271px;top:484.3px;width:849px;height:134.2px;background:#fff;border:1px solid #dedede;"></div>
<div style="left:283.2px;top:495.5px;width:824.8px;height:111.5px;background:#f2f2f2;"></div>
<div style="left:283.2px;top:550.7px;width:824.8px;height:0.8px;background:#d6d6d6;"></div>
<svg style="left:0px;top:0px;" width="1200" height="674" viewBox="0 0 1200 674"><path d="M317.85 505.60 C329.31 516.13 363.66 564.09 386.56 568.81 C409.47 573.53 432.37 544.03 455.27 533.93 C478.17 523.82 501.08 507.14 523.98 508.18 C546.88 509.22 569.78 525.27 592.69 540.17 C615.59 555.08 638.49 600.21 661.40 597.62 C684.30 595.02 707.20 528.82 730.10 524.60 C753.01 520.38 775.91 567.90 798.81 572.30 C821.72 576.70 844.62 554.55 867.52 551.00 C890.42 547.45 913.33 551.00 936.23 551.00 C959.13 551.00 982.03 551.00 1004.94 551.00 C1027.84 551.00 1062.19 551.00 1073.65 551.00" fill="none" stroke="#6c9dd2" stroke-width="1.75" stroke-linecap="round"/></svg>
<div class="t" style="left:300.87px;top:486.70px;font-size:9px;line-height:13px;color:#404040;transform:scaleX(0.9300);transform-origin:0 50%;">R$ 3.250</div>
<div class="t" style="left:310.60px;top:556.50px;font-size:9px;line-height:13px;color:#595959;">Jan</div>
<div class="t" style="left:368.18px;top:549.91px;font-size:9px;line-height:13px;color:#404040;transform:scaleX(0.9300);transform-origin:0 50%;">-R$ 1.275</div>
<div class="t" style="left:379.06px;top:556.50px;font-size:9px;line-height:13px;color:#595959;">Fev</div>
<div class="t" style="left:438.29px;top:515.03px;font-size:9px;line-height:13px;color:#404040;transform:scaleX(0.9300);transform-origin:0 50%;">R$ 1.222</div>
<div class="t" style="left:447.52px;top:556.50px;font-size:9px;line-height:13px;color:#595959;">Mar</div>
<div class="t" style="left:506.99px;top:489.28px;font-size:9px;line-height:13px;color:#404040;transform:scaleX(0.9300);transform-origin:0 50%;">R$ 3.065</div>
<div class="t" style="left:516.98px;top:556.50px;font-size:9px;line-height:13px;color:#595959;">Abr</div>
<div class="t" style="left:579.19px;top:521.27px;font-size:9px;line-height:13px;color:#404040;transform:scaleX(0.9300);transform-origin:0 50%;">R$ 775</div>
<div class="t" style="left:585.44px;top:556.50px;font-size:9px;line-height:13px;color:#595959;">Mai</div>
<div class="t" style="left:643.02px;top:578.72px;font-size:9px;line-height:13px;color:#404040;transform:scaleX(0.9300);transform-origin:0 50%;">-R$ 3.337</div>
<div class="t" style="left:654.14px;top:556.50px;font-size:9px;line-height:13px;color:#595959;">Jun</div>
<div class="t" style="left:713.12px;top:505.70px;font-size:9px;line-height:13px;color:#404040;transform:scaleX(0.9300);transform-origin:0 50%;">R$ 1.890</div>
<div class="t" style="left:724.35px;top:556.50px;font-size:9px;line-height:13px;color:#595959;">Jul</div>
<div class="t" style="left:780.43px;top:553.40px;font-size:9px;line-height:13px;color:#404040;transform:scaleX(0.9300);transform-origin:0 50%;">-R$ 1.525</div>
<div class="t" style="left:790.81px;top:556.50px;font-size:9px;line-height:13px;color:#595959;">Ago</div>
<div class="t" style="left:858.68px;top:532.10px;font-size:9px;line-height:13px;color:#404040;transform:scaleX(0.9300);transform-origin:0 50%;">R$ 0</div>
<div class="t" style="left:860.77px;top:556.50px;font-size:9px;line-height:13px;color:#595959;">Set</div>
<div class="t" style="left:927.39px;top:532.10px;font-size:9px;line-height:13px;color:#404040;transform:scaleX(0.9300);transform-origin:0 50%;">R$ 0</div>
<div class="t" style="left:928.98px;top:556.50px;font-size:9px;line-height:13px;color:#595959;">Out</div>
<div class="t" style="left:996.10px;top:532.10px;font-size:9px;line-height:13px;color:#404040;transform:scaleX(0.9300);transform-origin:0 50%;">R$ 0</div>
<div class="t" style="left:996.94px;top:556.50px;font-size:9px;line-height:13px;color:#595959;">Nov</div>
<div class="t" style="left:1064.81px;top:532.10px;font-size:9px;line-height:13px;color:#404040;transform:scaleX(0.9300);transform-origin:0 50%;">R$ 0</div>
<div class="t" style="left:1065.64px;top:556.50px;font-size:9px;line-height:13px;color:#595959;">Dez</div>
<div style="left:1181px;top:182px;width:19px;height:449px;background:#e6e6e6;"></div>
<div style="left:1181px;top:198.5px;width:0.8px;height:432px;background:#cccccc;"></div>
<div style="left:1184px;top:183.3px;width:13px;height:13.5px;background:#fff;border:1px solid #c9c9c9;"></div>
<svg style="left:1187.2px;top:187.5px;" width="6.6" height="4.2" viewBox="0 0 6.6 4.2"><path d="M0 4.2 L3.3 0.3 L6.6 4.2 Z" fill="#666"/></svg>
<div style="left:1184px;top:196.8px;width:13px;height:274.7px;background:#fff;border:1px solid #c9c9c9;"></div>
<div style="left:1184px;top:471.5px;width:13px;height:145.5px;background:#dadada;"></div>
<div style="left:1184px;top:617px;width:13px;height:12.5px;background:#fff;border:1px solid #c9c9c9;"></div>
<svg style="left:1187.2px;top:621.2px;" width="6.6" height="4.2" viewBox="0 0 6.6 4.2"><path d="M0 0.3 L3.3 4.2 L6.6 0.3 Z" fill="#666"/></svg>
<div style="left:0px;top:630px;width:1200px;height:24px;background:#e6e6e6;"></div>
<div style="left:0px;top:630px;width:1181px;height:1px;background:#a6a6a6;"></div>
<div style="left:87.5px;top:633.5px;width:1px;height:17px;background:#b0b0b0;"></div>
<div style="left:133.0px;top:633.5px;width:1px;height:17px;background:#b0b0b0;"></div>
<div style="left:174.0px;top:633.5px;width:1px;height:17px;background:#b0b0b0;"></div>
<div style="left:218.0px;top:633.5px;width:1px;height:17px;background:#b0b0b0;"></div>
<div style="left:260.0px;top:633.5px;width:1px;height:17px;background:#b0b0b0;"></div>
<div style="left:302.0px;top:633.5px;width:1px;height:17px;background:#b0b0b0;"></div>
<div style="left:344.5px;top:633.5px;width:1px;height:17px;background:#b0b0b0;"></div>
<div style="left:391.0px;top:633.5px;width:1px;height:17px;background:#b0b0b0;"></div>
<div style="left:435.5px;top:633.5px;width:1px;height:17px;background:#b0b0b0;"></div>
<div style="left:477.0px;top:633.5px;width:1px;height:17px;background:#b0b0b0;"></div>
<div style="left:518.0px;top:633.5px;width:1px;height:17px;background:#b0b0b0;"></div>
<div style="left:565.5px;top:633.5px;width:1px;height:17px;background:#b0b0b0;"></div>
<div style="left:605.5px;top:633.5px;width:1px;height:17px;background:#b0b0b0;"></div>
<div style="left:646.0px;top:633.5px;width:1px;height:17px;background:#b0b0b0;"></div>
<div style="left:686.0px;top:633.5px;width:1px;height:17px;background:#b0b0b0;"></div>
<div style="left:730.5px;top:633.5px;width:1px;height:17px;background:#b0b0b0;"></div>
<div style="left:854.0px;top:633.5px;width:1px;height:17px;background:#b0b0b0;"></div>
<div style="left:899.5px;top:633.5px;width:1px;height:17px;background:#b0b0b0;"></div>
<div style="left:943.5px;top:633.5px;width:1px;height:17px;background:#b0b0b0;"></div>
<div style="left:984.0px;top:633.5px;width:1px;height:17px;background:#b0b0b0;"></div>
<div class="t" style="left:99.82px;top:634.20px;font-size:10.6px;line-height:15px;color:#505050;transform:scaleX(0.9100);transform-origin:0 50%;">CAD</div>
<div class="t" style="left:143.36px;top:634.20px;font-size:10.6px;line-height:15px;color:#505050;transform:scaleX(0.9100);transform-origin:0 50%;">PRF</div>
<div class="t" style="left:184.55px;top:634.20px;font-size:10.6px;line-height:15px;color:#505050;transform:scaleX(0.9100);transform-origin:0 50%;">ROP</div>
<div class="t" style="left:228.55px;top:634.20px;font-size:10.6px;line-height:15px;color:#505050;transform:scaleX(0.9100);transform-origin:0 50%;">GEC</div>
<div class="t" style="left:271.09px;top:634.20px;font-size:10.6px;line-height:15px;color:#505050;transform:scaleX(0.9100);transform-origin:0 50%;">DES</div>
<div class="t" style="left:313.09px;top:634.20px;font-size:10.6px;line-height:15px;color:#505050;transform:scaleX(0.9100);transform-origin:0 50%;">PCP</div>
<div class="t" style="left:356.29px;top:634.20px;font-size:10.6px;line-height:15px;color:#505050;transform:scaleX(0.9100);transform-origin:0 50%;">CON</div>
<div class="t" style="left:401.29px;top:634.20px;font-size:10.6px;line-height:15px;color:#505050;transform:scaleX(0.9100);transform-origin:0 50%;">ORD</div>
<div class="t" style="left:445.82px;top:634.20px;font-size:10.6px;line-height:15px;color:#505050;transform:scaleX(0.9100);transform-origin:0 50%;">GES</div>
<div class="t" style="left:487.62px;top:634.20px;font-size:10.6px;line-height:15px;color:#505050;transform:scaleX(0.9100);transform-origin:0 50%;">REL</div>
<div class="t" style="left:529.75px;top:634.20px;font-size:10.6px;line-height:15px;color:#505050;transform:scaleX(0.9100);transform-origin:0 50%;">COM</div>
<div class="t" style="left:574.63px;top:634.20px;font-size:10.6px;line-height:15px;color:#505050;transform:scaleX(0.9100);transform-origin:0 50%;">EST</div>
<div class="t" style="left:615.36px;top:634.20px;font-size:10.6px;line-height:15px;color:#505050;transform:scaleX(0.9100);transform-origin:0 50%;">ESP</div>
<div class="t" style="left:656.89px;top:634.20px;font-size:10.6px;line-height:15px;color:#505050;transform:scaleX(0.9100);transform-origin:0 50%;">FLC</div>
<div class="t" style="left:698.09px;top:634.20px;font-size:10.6px;line-height:15px;color:#505050;transform:scaleX(0.9100);transform-origin:0 50%;">DAS</div>
<div class="t" style="left:742.09px;top:634.20px;font-size:10.6px;line-height:15px;color:#505050;transform:scaleX(0.9100);transform-origin:0 50%;">DAE</div>
<div class="t" style="left:828.84px;top:634.20px;font-size:10.6px;line-height:15px;color:#505050;transform:scaleX(0.9100);transform-origin:0 50%;">INI</div>
<div class="t" style="left:866.82px;top:634.20px;font-size:10.6px;line-height:15px;color:#505050;transform:scaleX(0.9100);transform-origin:0 50%;">DUV</div>
<div class="t" style="left:910.55px;top:634.20px;font-size:10.6px;line-height:15px;color:#505050;transform:scaleX(0.9100);transform-origin:0 50%;">SUG</div>
<div class="t" style="left:954.89px;top:634.20px;font-size:10.6px;line-height:15px;color:#505050;transform:scaleX(0.9100);transform-origin:0 50%;">LUZ</div>
<div style="left:774.4px;top:630px;width:43.4px;height:21.8px;background:#fff;border-bottom:2px solid #217346;border-left:1px solid #b8b8b8;border-right:1px solid #b8b8b8;"></div>
<div class="t" style="left:785.15px;top:634.20px;font-size:10.8px;line-height:15px;color:#217346;font-weight:bold;transform:scaleX(0.9779);transform-origin:0 50%;">DFC</div>
<svg style="left:23.5px;top:637.8px;" width="30" height="8" viewBox="0 0 30 8"><path d="M4.2 0 L0.2 4 L4.2 8 Z M25.3 0 L29.3 4 L25.3 8 Z" fill="#c4c4c4"/></svg>
<svg style="left:1014px;top:635px;" width="14" height="14" viewBox="0 0 14 14"><circle cx="7" cy="7" r="6" fill="none" stroke="#666" stroke-width="1"/><path d="M3.5 7 H10.5 M7 3.5 V10.5" stroke="#666" stroke-width="1.4"/></svg>
<div style="left:1090.5px;top:638px;width:1.4px;height:1.4px;background:#b0b0b0;"></div>
<div style="left:1090.5px;top:641.6px;width:1.4px;height:1.4px;background:#b0b0b0;"></div>
<div style="left:1090.5px;top:645.2px;width:1.4px;height:1.4px;background:#b0b0b0;"></div>
<div style="left:1105px;top:636.3px;width:13px;height:12.2px;background:#fff;border:1px solid #c6c6c6;"></div>
<svg style="left:1109px;top:639px;" width="5" height="7" viewBox="0 0 5 7"><path d="M4.5 0 L0.5 3.5 L4.5 7 Z" fill="#555"/></svg>
<div style="left:1118px;top:636.3px;width:22px;height:12.2px;background:#fff;border:1px solid #c6c6c6;"></div>
<div style="left:1140px;top:636.3px;width:27px;height:12.2px;background:#dadada;"></div>
<div style="left:1167px;top:636.3px;width:13px;height:12.2px;background:#fff;border:1px solid #c6c6c6;"></div>
<svg style="left:1171px;top:639px;" width="5" height="7" viewBox="0 0 5 7"><path d="M0.5 0 L4.5 3.5 L0.5 7 Z" fill="#555"/></svg>
<div style="left:0px;top:653.8px;width:1200px;height:20.2px;background:#f3f2f1;"></div>
<div class="t" style="left:6.30px;top:657.60px;font-size:10.4px;line-height:14px;color:#444;transform:scaleX(0.9799);transform-origin:0 50%;">Pronto</div>
<div style="left:954px;top:654px;width:32.5px;height:20px;background:#c8c8c8;"></div>
<div class="t" style="left:1175.00px;top:657.00px;font-size:10.5px;line-height:15px;color:#444;transform:scaleX(0.8565);transform-origin:0 50%;">90%</div>
<div style="left:1068px;top:664px;width:87px;height:1px;background:#a0a0a0;"></div>
<div style="left:1105px;top:659px;width:4.3px;height:9.6px;background:#5a5a5a;"></div>
<div class="t" style="left:1057.66px;top:656.00px;font-size:12px;line-height:16px;color:#444;">–</div>
<div class="t" style="left:1157.20px;top:655.50px;font-size:13px;line-height:18px;color:#444;">+</div>
<div style="left:0px;top:672.6px;width:42px;height:1.4px;background:#111;"></div>
<div style="left:42px;top:673px;width:267px;height:1px;background:#a8a8a8;"></div>
<div style="left:309px;top:673px;width:35px;height:1px;background:#d8d8d8;"></div>
<div style="left:344px;top:672.6px;width:856px;height:1.4px;background:#111;"></div>
<svg style="left:185px;top:7.5px;" width="15" height="14.5" viewBox="0 0 15 14.5"><path d="M0.7 0.7 H14.3 V13.8 H2.2 L0.7 12.3 Z" fill="none" stroke="#ffffff" stroke-width="1.2"/><path d="M3.3 0.7 V5.3 H11.7 V0.7" fill="none" stroke="#ffffff" stroke-width="1.1"/><path d="M4.3 13.8 V9 H10.7 V13.8" fill="none" stroke="#ffffff" stroke-width="1.1"/></svg>
<svg style="left:210.8px;top:8px;" width="14" height="14" viewBox="0 0 14 14"><path d="M5 1 L1 5.2 L5.5 9" fill="none" stroke="#ffffff" stroke-width="1.3"/><path d="M1.2 5.2 H8 a4.3 4.3 0 0 1 0 8.6 H5.5" fill="none" stroke="#ffffff" stroke-width="1.3"/></svg>
<svg style="left:228px;top:12.5px;" width="5" height="3" viewBox="0 0 5 3"><path d="M0 0 H5 L2.5 3 Z" fill="#ffffff"/></svg>
<svg style="left:240.3px;top:8px;" width="14" height="14" viewBox="0 0 14 14"><path d="M9 1 L13 5.2 L8.5 9" fill="none" stroke="#4f9370" stroke-width="1.3"/><path d="M12.8 5.2 H6 a4.3 4.3 0 0 0 0 8.6 H8.5" fill="none" stroke="#4f9370" stroke-width="1.3"/></svg>
<svg style="left:258.5px;top:12.5px;" width="5" height="3" viewBox="0 0 5 3"><path d="M0 0 H5 L2.5 3 Z" fill="#4f9370"/></svg>
<svg style="left:274px;top:7.5px;" width="13.5" height="15" viewBox="0 0 13.5 15"><path d="M6 13.6 H0.7 V0.7 H7.5 L11 4.2 V7" fill="none" stroke="#ffffff" stroke-width="1.2"/><path d="M7.3 0.7 V4.4 H11" fill="none" stroke="#ffffff" stroke-width="1"/><rect x="5.2" y="9" width="7.8" height="3.6" fill="#ffffff"/><rect x="6.8" y="6.8" width="4.6" height="2.4" fill="none" stroke="#ffffff" stroke-width="1"/><rect x="6.8" y="12" width="4.6" height="2.6" fill="#ffffff" stroke="#217346" stroke-width="0.6"/></svg>
<svg style="left:297.5px;top:8.5px;" width="14.5" height="11" viewBox="0 0 14.5 11"><rect x="0.6" y="1.8" width="13.8" height="8.6" fill="none" stroke="#4f9370" stroke-width="1.1"/><path d="M4.5 1.8 L5.5 0.5 H9.5 L10.5 1.8" fill="none" stroke="#4f9370" stroke-width="1"/><circle cx="7.5" cy="6" r="2.6" fill="none" stroke="#4f9370" stroke-width="1.1"/></svg>
<svg style="left:327px;top:11.5px;" width="5.5" height="6" viewBox="0 0 5.5 6"><rect x="0" y="0" width="5.5" height="1.2" fill="#ffffff"/><path d="M0 2.8 H5.5 L2.75 5.8 Z" fill="#ffffff"/></svg>
<svg style="left:1052px;top:10px;" width="12.5" height="9" viewBox="0 0 12.5 9"><rect x="0.6" y="0.6" width="11.3" height="7.8" fill="none" stroke="#ffffff" stroke-width="1.1"/><rect x="0.6" y="0.6" width="11.3" height="1.6" fill="#ffffff"/><path d="M6.2 7 V3.6 M4.6 5 L6.2 3.5 L7.8 5" fill="none" stroke="#ffffff" stroke-width="1"/></svg>
<div style="left:1094.5px;top:14px;width:9.5px;height:1px;background:#ffffff;"></div>
<svg style="left:1135px;top:10px;" width="9.5" height="9" viewBox="0 0 9.5 9"><rect x="0.5" y="2.3" width="6.6" height="6.2" fill="none" stroke="#ffffff" stroke-width="1"/><path d="M2.4 2.3 V0.5 H9 V6.6 H7.1" fill="none" stroke="#ffffff" stroke-width="1"/></svg>
<svg style="left:1175px;top:10px;" width="9.5" height="9" viewBox="0 0 9.5 9"><path d="M0.5 0.3 L9 8.7 M9 0.3 L0.5 8.7" stroke="#ffffff" stroke-width="1.1"/></svg>
<svg style="left:735.5px;top:37px;" width="13" height="13" viewBox="0 0 13 13"><circle cx="8" cy="4.8" r="4" fill="none" stroke="#605e5c" stroke-width="1.1"/><path d="M5.2 7.7 L0.6 12.3" stroke="#605e5c" stroke-width="1.2"/></svg>
<svg style="left:1097px;top:37.6px;" width="11" height="10.5" viewBox="0 0 11 10.5"><path d="M4 3.5 H0.6 V9.9 H9 V7.5" fill="none" stroke="#217346" stroke-width="1.1"/><path d="M2.8 7.5 Q3.5 3.2 8 3.2 M6.3 0.8 L9.2 3.2 L6.3 5.6" fill="none" stroke="#217346" stroke-width="1.1"/></svg>
<svg style="left:80.5px;top:159.5px;" width="6.5" height="4" viewBox="0 0 6.5 4"><path d="M0 0 H6.5 L3.25 4 Z" fill="#777"/></svg>
<div style="left:106.5px;top:157px;width:1.5px;height:1.5px;background:#b5b5b5;"></div>
<div style="left:106.5px;top:161px;width:1.5px;height:1.5px;background:#b5b5b5;"></div>
<div style="left:106.5px;top:165px;width:1.5px;height:1.5px;background:#b5b5b5;"></div>
<svg style="left:132.3px;top:157.3px;" width="10" height="9" viewBox="0 0 10 9"><path d="M0.8 0.6 L9.2 8.4 M9.2 0.6 L0.8 8.4" stroke="#c2c2c2" stroke-width="1.4"/></svg>
<svg style="left:163.5px;top:156.5px;" width="11.5" height="10" viewBox="0 0 11.5 10"><path d="M0.8 5.6 L4.2 9 L10.8 0.8" fill="none" stroke="#c2c2c2" stroke-width="1.5"/></svg>
<div class="t" style="left:196.00px;top:151.60px;font-size:13.5px;line-height:18px;color:#4a4a4a;font-style:italic;font-family:'Liberation Serif',serif;-webkit-text-stroke:0.35px #4a4a4a;">f</div>
<div class="t" style="left:200.40px;top:156.70px;font-size:9px;line-height:13px;color:#4a4a4a;font-style:italic;font-family:'Liberation Serif',serif;-webkit-text-stroke:0.35px #4a4a4a;">x</div>
<svg style="left:1184px;top:158px;" width="8" height="5" viewBox="0 0 8 5"><path d="M0.7 0.7 L4 4 L7.3 0.7" fill="none" stroke="#666" stroke-width="1.3"/></svg>
<svg style="left:54.3px;top:658px;" width="12" height="12" viewBox="0 0 12 12"><rect x="1.6" y="1.8" width="9.6" height="9.4" fill="#fff" stroke="#6a6a6a" stroke-width="1"/><rect x="5.5" y="1.3" width="6.2" height="2" fill="#6a6a6a"/><path d="M1.6 6 H11.2 M1.6 8.6 H11.2 M4.8 4 V11.2 M8 4 V11.2" stroke="#7a7a7a" stroke-width="0.8"/><circle cx="3" cy="3" r="2.7" fill="#6a6a6a"/></svg>
<svg style="left:964px;top:658.5px;" width="11" height="11" viewBox="0 0 11 11"><rect x="0.5" y="0.5" width="10" height="10" fill="none" stroke="#555" stroke-width="1"/><path d="M0.5 3.8 H10.5 M0.5 7.2 H10.5 M3.8 0.5 V10.5 M7.2 0.5 V10.5" stroke="#555" stroke-width="0.8"/></svg>
<svg style="left:998px;top:658.5px;" width="11" height="11" viewBox="0 0 11 11"><rect x="0.5" y="0.5" width="10" height="10" fill="none" stroke="#555" stroke-width="1"/><rect x="2.8" y="2.8" width="5.4" height="5.4" fill="none" stroke="#555" stroke-width="0.9"/><path d="M4 4.7 H7 M4 6.3 H7" stroke="#555" stroke-width="0.6"/></svg>
<svg style="left:1031px;top:658.5px;" width="12" height="11" viewBox="0 0 12 11"><rect x="0.5" y="0.5" width="11" height="10" fill="none" stroke="#555" stroke-width="1"/><path d="M4.2 0.5 V6 H11.5 M7.8 0.5 V6" fill="none" stroke="#555" stroke-width="0.9"/></svg>
</div></body></html>
